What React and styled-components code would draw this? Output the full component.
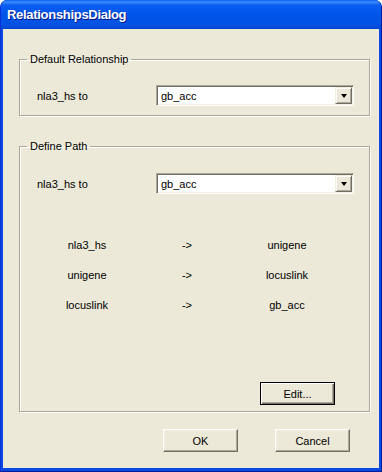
import styled, { createGlobalStyle } from 'styled-components';

const GlobalStyle = createGlobalStyle`
  html, body {
    margin: 0;
    padding: 0;
    background: #ffffff;
  }
  body {
    font-family: "Liberation Sans", Arial, sans-serif;
    font-size: 11px;
    color: #000;
  }
`;

const Window = styled.div`
  width: 382px;
  height: 472px;
  display: flex;
  flex-direction: column;
  box-sizing: border-box;
  background: #0a4ae0;
  border-left: 1px solid #0831d9;
  border-right: 1px solid #001ea0;
  border-bottom: 1px solid #001ea0;
  border-radius: 7px 7px 0 0;
  overflow: hidden;
`;

const TitleBar = styled.div`
  height: 29px;
  flex: none;
  display: flex;
  align-items: center;
  padding-left: 6px;
  background: linear-gradient(
    to bottom,
    #0b61f5 0%,
    #3a8bf8 7%,
    #0a5cf2 18%,
    #0055e8 50%,
    #0052e2 85%,
    #0045cf 100%
  );
  color: #fff;
  font-weight: bold;
  font-size: 13px;
  letter-spacing: -0.3px;
  text-shadow: 1px 1px #0a1883;
`;

const Client = styled.div`
  flex: 1;
  margin: 0 2px 3px 2px;
  background: #ece9d8;
  padding: 24px 9px 0 16px;
  display: flex;
  flex-direction: column;
`;

const Group = styled.fieldset`
  margin: ${({ $top }) => $top || 0}px 0 0 0;
  width: 351px;
  box-sizing: border-box;
  border: 1px solid #aca899;
  box-shadow: inset 1px 1px #fff, 1px 1px #fff;
  padding: ${({ $pad }) => $pad};
  min-inline-size: 0;
`;

const Legend = styled.legend`
  margin-left: -10px;
  padding: 0 3px;
  line-height: 13px;
`;

const Row = styled.div`
  display: flex;
  align-items: center;
`;

const Label = styled.span`
  width: 119px;
`;

const Combo = styled.div`
  width: 198px;
  height: 21px;
  box-sizing: border-box;
  display: flex;
  align-items: center;
  background: #fff;
  border: 1px solid;
  border-color: #aca899 #fff #fff #aca899;
  box-shadow: inset 1px 1px #716f64, inset -1px -1px #f1efe2;
  padding: 1px;
`;

const ComboText = styled.span`
  flex: 1;
  padding-left: 3px;
`;

const ArrowButton = styled.div`
  width: 17px;
  height: 17px;
  box-sizing: border-box;
  background: #ece9d8;
  border: 1px solid;
  border-color: #f1efe2 #716f64 #716f64 #f1efe2;
  box-shadow: inset 1px 1px #fff, inset -1px -1px #aca899;
  display: flex;
  align-items: center;
  justify-content: center;

  &::after {
    content: '';
    width: 0;
    height: 0;
    border-left: 3.5px solid transparent;
    border-right: 3.5px solid transparent;
    border-top: 4px solid #000;
  }
`;

const PathGrid = styled.div`
  margin-top: 36px;
  display: grid;
  grid-template-columns: repeat(3, 100px);
  grid-auto-rows: 30px;
`;

const Cell = styled.div`
  display: flex;
  align-items: center;
  justify-content: center;
`;

const Button = styled.button`
  width: 75px;
  height: 23px;
  box-sizing: border-box;
  font-family: "Liberation Sans", Arial, sans-serif;
  font-size: 11px;
  color: #000;
  background: #ece9d8;
  border: 1px solid;
  border-color: #fff #716f64 #716f64 #fff;
  box-shadow: inset -1px -1px #aca899, inset 1px 1px #f1efe2;
  padding: 0;
  cursor: pointer;

  &.default {
    border: 1px solid #000;
    box-shadow: inset 1px 1px #fff, inset -1px -1px #716f64,
      inset -2px -2px #aca899;
  }
`;

const EditRow = styled.div`
  margin-top: 62px;
  display: flex;
  justify-content: flex-end;
  padding-right: 19px;
`;

const Footer = styled.div`
  margin-top: 17px;
  display: flex;
  justify-content: flex-end;
  gap: 37px;
  padding-right: 20px;
`;

const pathRows = [
  ['nla3_hs', 'unigene'],
  ['unigene', 'locuslink'],
  ['locuslink', 'gb_acc'],
];

const ComboBox = ({ value }) => (
  <Combo>
    <ComboText>{value}</ComboText>
    <ArrowButton />
  </Combo>
);

export default function App() {
  return (
    <>
      <GlobalStyle />
      <Window>
        <TitleBar>RelationshipsDialog</TitleBar>
        <Client>
          <Group $pad="19px 15px 9px 17px">
            <Legend>Default Relationship</Legend>
            <Row>
              <Label>nla3_hs to</Label>
              <ComboBox value="gb_acc" />
            </Row>
          </Group>

          <Group $top={24} $pad="20px 15px 6px 17px">
            <Legend>Define Path</Legend>
            <Row>
              <Label>nla3_hs to</Label>
              <ComboBox value="gb_acc" />
            </Row>
            <PathGrid>
              {pathRows.map(([from, to]) => [
                <Cell key={from + 'a'}>{from}</Cell>,
                <Cell key={from + 'b'}>-&gt;</Cell>,
                <Cell key={from + 'c'}>{to}</Cell>,
              ])}
            </PathGrid>
            <EditRow>
              <Button className="default">Edit...</Button>
            </EditRow>
          </Group>

          <Footer>
            <Button>OK</Button>
            <Button>Cancel</Button>
          </Footer>
        </Client>
      </Window>
    </>
  );
}
